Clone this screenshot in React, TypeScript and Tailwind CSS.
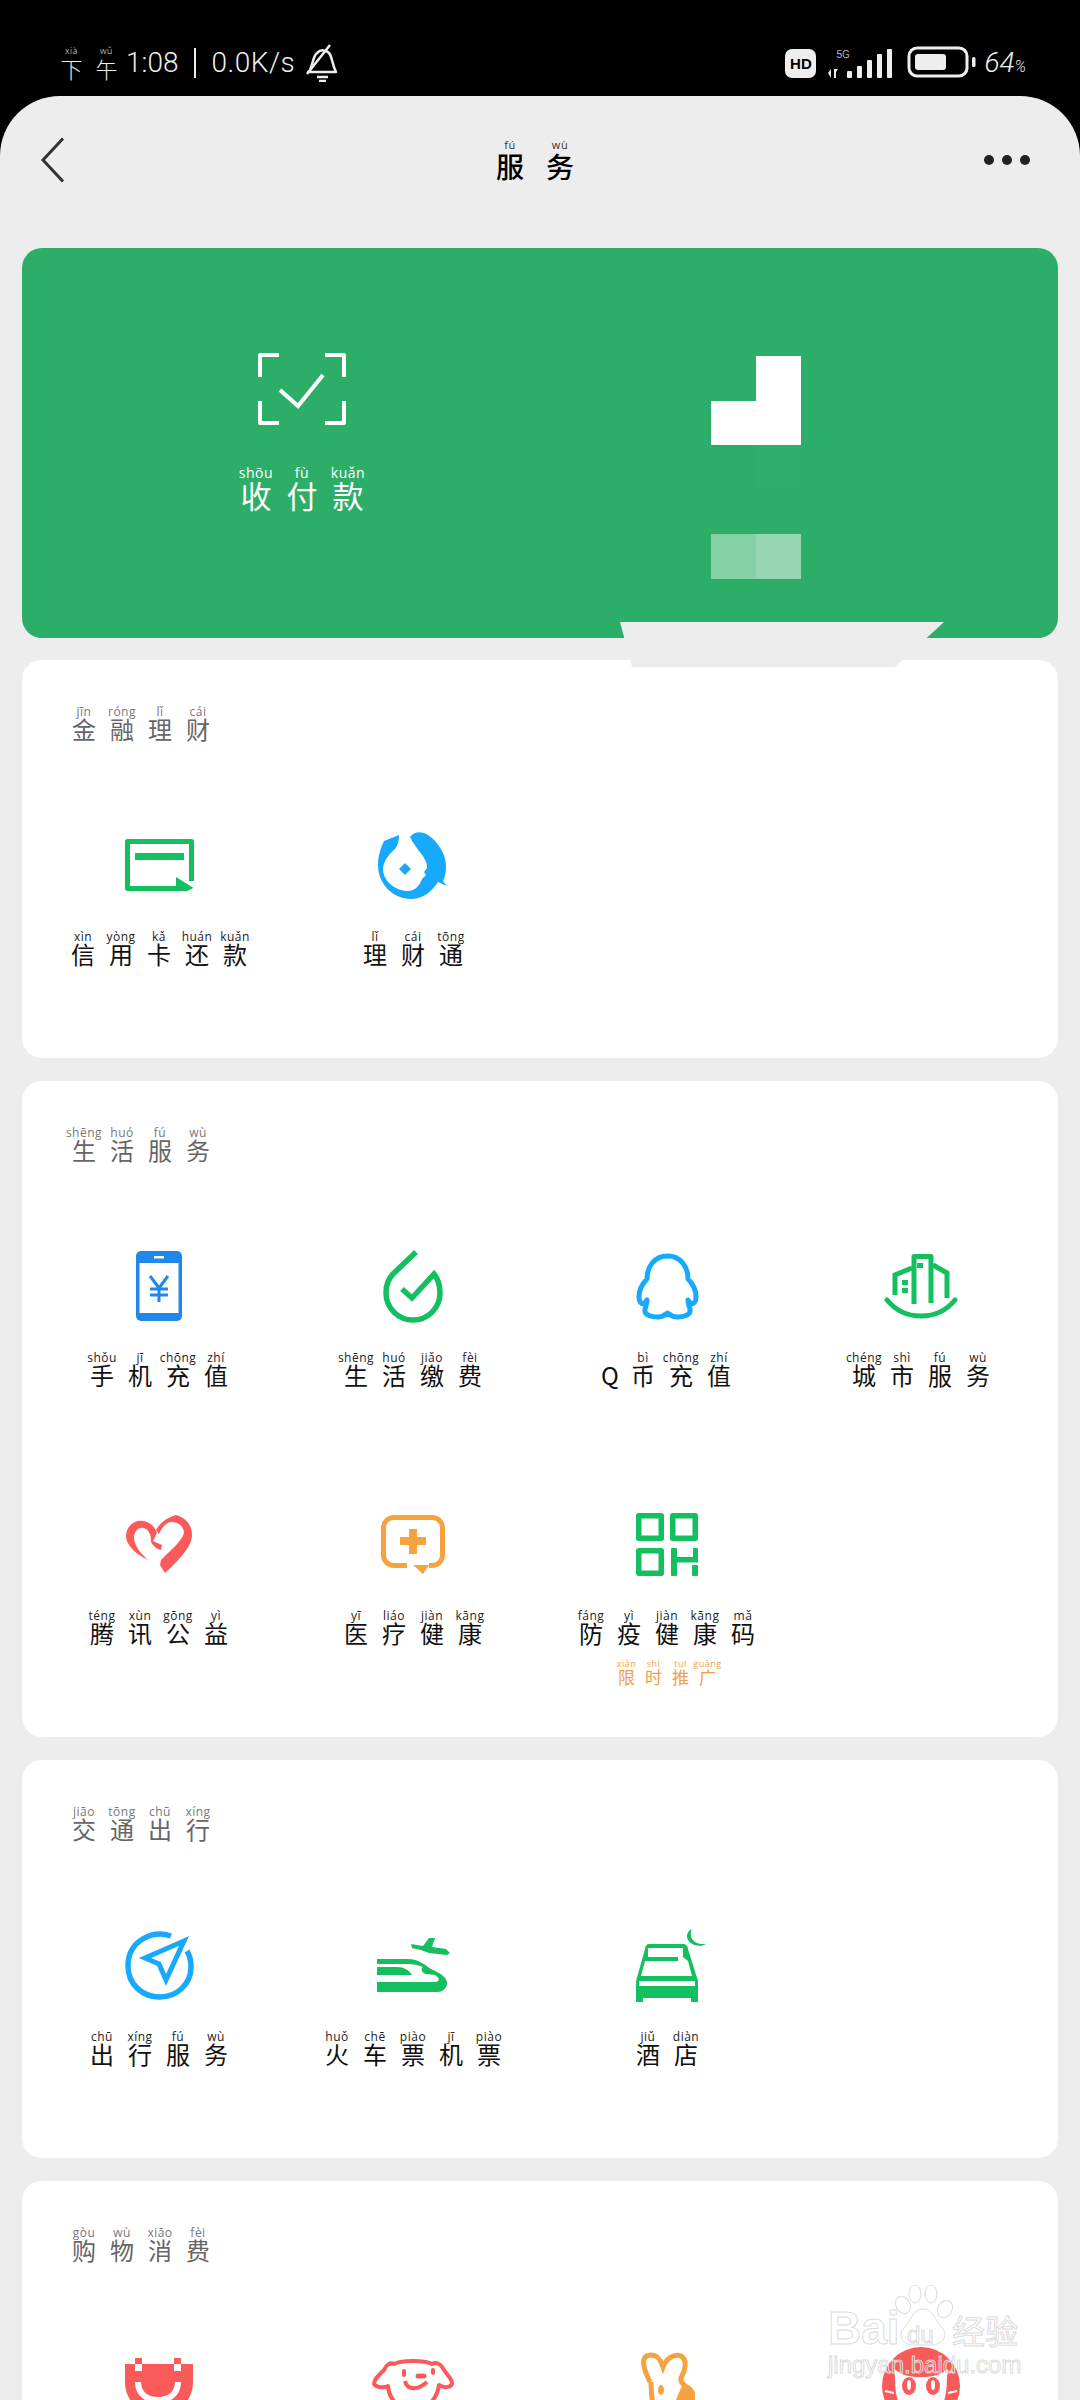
import type { ReactNode } from "react";

const sizes = {
  nav: { cell: "w-[50px]", py: "h-[12px] text-[11px] leading-[12px] text-[#333]", ch: "h-[30px] text-[28px] leading-[30px] text-black font-medium" },
  pay: { cell: "w-[46px]", py: "h-[16px] text-[14px] leading-[16px] text-white", ch: "h-[28px] text-[31px] leading-[28px] text-white" },
  title: { cell: "w-[38px]", py: "h-[14px] text-[12px] leading-[14px] text-[#777]", ch: "h-[20px] text-[24px] leading-[20px] text-[#666]" },
  item: { cell: "w-[38px]", py: "h-[14px] text-[12px] leading-[14px] text-[#222]", ch: "h-[20px] text-[24px] leading-[20px] text-[#111]" },
  promo: { cell: "w-[27px]", py: "h-[10px] text-[9px] leading-[10px] text-[#f0a04b]", ch: "h-[16px] text-[17px] leading-[16px] text-[#f0a04b]" },
  status: { cell: "w-[35px]", py: "h-[10px] text-[9px] leading-[10px] text-[#eee]", ch: "h-[24px] text-[22px] leading-[24px] text-[#eee]" },
};

function Py({ text, py, size }: { text: string; py: string; size: keyof typeof sizes }) {
  const s = sizes[size];
  const syllables = py.split(" ");
  return (
    <div className="flex justify-center">
      {Array.from(text).map((c, i) => (
        <div key={i} className={`flex flex-col items-center ${c === "Q" ? "w-[28px]" : s.cell}`}>
          <span className={`whitespace-nowrap tracking-[0.5px] font-['Open_Sans',sans-serif] ${s.py}`}>{syllables[i] === "_" ? "" : syllables[i]}</span>
          <span className={`font-['Noto_Sans_CJK_SC',sans-serif] ${s.ch}`}>{c}</span>
        </div>
      ))}
    </div>
  );
}

const CardIcon = () => (
  <svg width="69" height="52" viewBox="0 0 69 52" fill="none">
    <path d="M66.5 42V2.5H2.5V49.5H52" stroke="#13bf5f" strokeWidth="5" strokeLinejoin="round" />
    <rect x="10" y="14" width="49" height="7" fill="#13bf5f" />
    <path d="M51 38L68.5 49L62 52H51Z" fill="#13bf5f" />
  </svg>
);

const FishIcon = () => (
  <svg width="70" height="67" viewBox="0 0 70 67">
    <path d="M32 5C36 -1 44 -1 50 3C60 10 68 22 68 34C68 42 66 47 65 49L69 54L60 50C52 62 43 67 33 67C15 67 0 52 0 33C0 24 3 15 6 9L21 3C21 9 20 13 17 17C10 23 5 30 5 38C6 50 18 59 30 59C36 59 41 55 44 47L48 43L46 40L49 36C50 26 38 18 32 5Z" fill="#17a9fb" />
    <path d="M27 31L33 37L27 43L21 37Z" fill="#17a9fb" />
  </svg>
);

const PhoneIcon = () => (
  <svg width="46" height="70" viewBox="0 0 46 70">
    <rect width="46" height="70" rx="5" fill="#1f88e8" />
    <rect x="3.5" y="12" width="39" height="50" fill="#fff" />
    <rect x="18" y="5" width="10" height="2.5" fill="#fff" />
    <path d="M14 25L23 37L32 25M23 37V51M14 38H32M14 44H32" stroke="#1f88e8" strokeWidth="3" fill="none" />
  </svg>
);

const DropIcon = () => (
  <svg width="60" height="73" viewBox="0 0 60 73" fill="none">
    <path d="M33 2L10 24C5 29 3 36 3 43C3 58 15 70 30 70C45 70 57 58 57 43C57 36 55 29 51 24L29 48L19 39" stroke="#13bf5f" strokeWidth="5.5" />
  </svg>
);

const QQIcon = () => (
  <svg width="63" height="67" viewBox="0 0 63 67" fill="none">
    <path d="M31.5 3C19 3 11 13 11 26C6 31 3 37 3 44C3 48 5 51 8 51L11 47C11 50 10 53 9 56C8 61 13 64 22 64C27 64 29 62 31.5 60C34 62 36 64 41 64C50 64 55 61 54 56C53 53 52 50 52 47L55 51C58 51 60 48 60 44C60 37 57 31 52 26C52 13 44 3 31.5 3Z" stroke="#17a9fb" strokeWidth="5" strokeLinejoin="round" />
  </svg>
);

const CityIcon = () => (
  <svg width="74" height="66" viewBox="0 0 74 66" fill="none" stroke="#13bf5f" strokeWidth="5">
    <path d="M30 51V3.5H47V50" strokeLinejoin="round" />
    <path d="M11 42V22L28 15M49 12L63 20V45" />
    <path d="M3 47C12 58 24 63 37 63C50 63 62 58 71 47" strokeLinecap="round" />
    <g fill="#13bf5f" stroke="none">
      <rect x="33" y="10" width="6" height="5" />
      <rect x="18" y="27" width="6" height="5" />
      <rect x="18" y="35" width="6" height="5" />
    </g>
  </svg>
);

const HeartIcon = () => (
  <svg width="66" height="58" viewBox="0 0 66 58" fill="#fb5a5a">
    <path d="M30 15C34 8 40 3 50 0C60 3 66 10 66 20C66 32 52 46 39 58L34 50L35 45C44 36 56 26 58 18C58 11 52 7 45 7C39 8 36 13 33 19Z" />
    <path d="M31 18C28 9 20 5 12 6C4 8 0 14 0 22C1 32 12 40 22 45C14 38 8 30 8 22C9 14 15 11 20 14C25 17 25 24 25 27C27 31 32 35 35 35L36 30L27 26Z" />
  </svg>
);

const MedicalIcon = () => (
  <svg width="64" height="59" viewBox="0 0 64 59" fill="none">
    <path d="M26 50.5H13C7 50.5 2.5 46 2.5 40V13C2.5 7 7 2.5 13 2.5H51C57 2.5 61.5 7 61.5 13V40C61.5 46 57 50.5 51 50.5H48" stroke="#f6a23f" strokeWidth="5" />
    <path d="M32 50H48L42 59Z" fill="#f6a23f" />
    <path d="M28 14H36V22H45V30H36V39H28V30H19V22H28Z" fill="#f6a23f" />
  </svg>
);

const QrIcon = () => (
  <svg width="62" height="63" viewBox="0 0 62 63" fill="none">
    <g stroke="#13bf5f" strokeWidth="5.5" strokeLinejoin="round">
      <rect x="2.75" y="2.75" width="22.5" height="22.5" />
      <rect x="36.75" y="2.75" width="22.5" height="22.5" />
      <rect x="2.75" y="37.75" width="22.5" height="22.5" />
    </g>
    <g fill="#13bf5f">
      <rect x="35" y="35" width="6" height="28" rx="1" />
      <rect x="35" y="44" width="27" height="5.5" />
      <rect x="57" y="35" width="5" height="12" rx="1" />
      <rect x="56" y="52" width="6" height="11" rx="1" />
    </g>
  </svg>
);

const CompassIcon = () => (
  <svg width="69" height="69" viewBox="0 0 69 69" fill="none">
    <path d="M46 5C28 -1 3 9 3 35C3 54 18 66 35 66C52 66 66 53 66 36C66 30 65 25 62 20" stroke="#17a9fb" strokeWidth="5.5" />
    <path d="M59 10L20 27L34 33L41 49Z" stroke="#17a9fb" strokeWidth="5" strokeLinejoin="miter" />
  </svg>
);

const TrainIcon = () => (
  <svg width="73" height="54" viewBox="0 0 73 54" fill="#13bf5f">
    <path d="M34 6L46 8L52 0H58L55 9L69 11L73 15L70 17L52 15L44 12L35 10Z" />
    <path d="M0 21H30C41 21 47 26 54 31C66 36 73 42 69 49C66 54 62 54 58 54H0V44H58C63 44 63 40 58 37L50 36C45 36 43 30 46 29C41 27 36 26 30 26H0Z" />
    <path d="M0 29H20C27 29 32 32 35 37H0Z" />
  </svg>
);

const HotelIcon = () => (
  <svg className="ml-[8px]" width="70" height="73" viewBox="0 0 70 73">
    <path d="M13 15H47C50 15 52 17 52 20L62 52V73H0V52L9 20C9 17 11 15 13 15Z" fill="#13bf5f" />
    <rect x="12" y="19" width="35" height="9" rx="1" fill="#fff" />
    <path d="M9 32H42V28H47L52 32L56 47H5Z" fill="#fff" />
    <rect x="3" y="52" width="56" height="5" fill="#fff" />
    <rect x="7" y="69" width="48" height="4" fill="#fff" />
    <path d="M56 0C53 6 55 16 70 15C62 20 50 14 51 6C52 3 53 1 56 0Z" fill="#13bf5f" />
  </svg>
);

const BagIcon = () => (
  <svg width="68" height="56" viewBox="0 0 68 56" fill="none">
    <path d="M0 6H68V24C68 42 55 56 34 56C13 56 0 42 0 24Z" fill="#fb5a5a" />
    <rect x="10" width="7" height="6" fill="#fb5a5a" />
    <rect x="49" width="7" height="6" fill="#fb5a5a" />
    <rect x="10" y="6" width="7" height="7" fill="#fff" />
    <rect x="49" y="6" width="7" height="7" fill="#fff" />
    <path d="M13 24C13 36 22 42 33 42C44 42 53 36 53 24" stroke="#fff" strokeWidth="6" />
  </svg>
);

const DogIcon = () => (
  <svg width="82" height="56" viewBox="0 0 82 56" fill="none" stroke="#fb5a5a" strokeWidth="4">
    <path d="M22 6C30 2 52 2 60 6C66 3 70 8 72 12C76 18 81 22 80 26C78 30 72 30 67 27C65 42 54 52 41 52C28 52 17 42 16 28C12 30 5 30 2 26C2 21 7 17 12 12C14 7 18 4 22 6Z" strokeLinejoin="round" />
    <path d="M33 23C35 32 45 33 55 24" />
    <path d="M32 13V17" strokeLinecap="round" />
    <path d="M46 18H52" strokeWidth="5" strokeLinecap="round" />
    <path d="M61 12V15" strokeLinecap="round" />
  </svg>
);

const RabbitIcon = () => (
  <svg width="56" height="68" viewBox="0 0 56 68" fill="none">
    <path d="M11 30C4 16 1 4 11 3C19 2 22 9 24 15C27 7 35 1 42 4C49 8 46 19 42 26C41 30 44 32 46 34" stroke="#f6a23f" strokeWidth="5" />
    <path d="M12 30C12 40 14 54 15 68M46 34C50 36 55 40 55 48C55 56 50 62 44 68H34C36 60 38 48 46 34Z" stroke="#f6a23f" strokeWidth="5" fill="#f6a23f" />
    <ellipse cx="22" cy="38" rx="3" ry="5" fill="#f6a23f" />
  </svg>
);

const CatIcon = () => (
  <svg width="78" height="78" viewBox="0 0 78 78">
    <circle cx="39" cy="39" r="39" fill="#fb5a5a" />
    <path d="M12 22C20 28 26 30 39 30C52 30 58 28 66 22C64 32 66 42 62 54H16C12 42 14 32 12 22Z" fill="#fff" />
    <ellipse cx="27" cy="39" rx="7" ry="9" fill="#fb5a5a" />
    <ellipse cx="51" cy="39" rx="7" ry="9" fill="#fb5a5a" />
    <ellipse cx="27" cy="38" rx="2" ry="5" fill="#fff" />
    <ellipse cx="51" cy="38" rx="2" ry="5" fill="#fff" />
    <path d="M3 44L12 46M75 44L66 46" stroke="#fff" strokeWidth="2" />
  </svg>
);

type Item = { text: string; py: string; icon: ReactNode; promo?: boolean };

const sections: { text: string; py: string; items: Item[] }[] = [
  {
    text: "金融理财",
    py: "jīn róng lǐ cái",
    items: [
      { text: "信用卡还款", py: "xìn yòng kǎ huán kuǎn", icon: <CardIcon /> },
      { text: "理财通", py: "lǐ cái tōng", icon: <FishIcon /> },
    ],
  },
  {
    text: "生活服务",
    py: "shēng huó fú wù",
    items: [
      { text: "手机充值", py: "shǒu jī chōng zhí", icon: <PhoneIcon /> },
      { text: "生活缴费", py: "shēng huó jiǎo fèi", icon: <DropIcon /> },
      { text: "Q币充值", py: "_ bì chōng zhí", icon: <QQIcon /> },
      { text: "城市服务", py: "chéng shì fú wù", icon: <CityIcon /> },
      { text: "腾讯公益", py: "téng xùn gōng yì", icon: <HeartIcon /> },
      { text: "医疗健康", py: "yī liáo jiàn kāng", icon: <MedicalIcon /> },
      { text: "防疫健康码", py: "fáng yì jiàn kāng mǎ", icon: <QrIcon />, promo: true },
    ],
  },
  {
    text: "交通出行",
    py: "jiāo tōng chū xíng",
    items: [
      { text: "出行服务", py: "chū xíng fú wù", icon: <CompassIcon /> },
      { text: "火车票机票", py: "huǒ chē piào jī piào", icon: <TrainIcon /> },
      { text: "酒店", py: "jiǔ diàn", icon: <HotelIcon /> },
    ],
  },
  {
    // labels of this row fall below the bottom of the screen
    text: "购物消费",
    py: "gòu wù xiāo fèi",
    items: [
      { text: "", py: "", icon: <BagIcon /> },
      { text: "", py: "", icon: <DogIcon /> },
      { text: "", py: "", icon: <RabbitIcon /> },
      { text: "", py: "", icon: <CatIcon /> },
    ],
  },
];

function StatusBar() {
  return (
    <div className="h-[96px] flex items-start pt-[46px] pl-[54px] pr-[54px] text-[#eee] font-['Roboto',sans-serif] font-light">
      <Py text="下午" py="xià wǔ" size="status" />
      <span className="ml-[2px] text-[28px] leading-[34px]">1:08</span>
      <span className="ml-[16px] mt-[2px] w-[2px] h-[30px] bg-[#eee]" />
      <span className="ml-[15px] text-[28px] leading-[34px] tracking-[0.5px]">0.0K/s</span>
      <svg className="ml-[9px] -mt-[2px]" width="36" height="38" viewBox="0 0 36 38" fill="none" stroke="#eee" strokeWidth="2.5">
        <path d="M6 26C9 20 9 12 13 9C17 5 22 6 25 9C28 12 28 20 32 28H3" strokeLinejoin="round" />
        <path d="M3 30L26 1" />
        <path d="M13 33H24M15 37H22" />
      </svg>
      <div className="ml-auto flex items-start">
        <div className="mt-[3px] w-[31px] h-[29px] rounded-[7px] bg-[#eee] text-black text-[15px] leading-[29px] font-black text-center font-['Liberation_Sans',sans-serif]">HD</div>
        <svg className="ml-[11px]" width="68" height="34" viewBox="0 0 68 34" fill="#eee">
          <text x="9" y="12" fontSize="11" fontFamily="Roboto, sans-serif">5G</text>
          <path d="M1 27L4 23V32ZM7 23H11L9 26V32H7Z" />
          <rect x="20" y="25" width="5" height="7" rx="1" />
          <rect x="30" y="20" width="5" height="12" rx="1" />
          <rect x="40" y="14" width="5" height="18" rx="1" />
          <rect x="50" y="8" width="5" height="24" rx="1" />
          <rect x="60" y="3" width="5" height="29" rx="1" />
        </svg>
        <svg className="ml-[12px]" width="70" height="32" viewBox="0 0 70 32" fill="none">
          <rect x="2" y="2" width="58" height="28" rx="8" stroke="#eee" strokeWidth="3" />
          <rect x="8" y="8" width="31" height="16" rx="3" fill="#eee" />
          <rect x="65" y="11" width="3.5" height="10" rx="1.5" fill="#eee" />
        </svg>
        <span className="ml-[7px] text-[28px] leading-[34px] italic">64<span className="text-[16px]">%</span></span>
      </div>
    </div>
  );
}

function Nav() {
  return (
    <div className="h-[152px] pb-[24px] flex items-center">
      <div className="w-[485px] pl-[41px]">
        <svg width="24" height="46" viewBox="0 0 24 46" fill="none">
          <path d="M22 1.5L2 23L22 44.5" stroke="#333" strokeWidth="3" />
        </svg>
      </div>
      <Py text="服务" py="fú wù" size="nav" />
      <div className="ml-auto pr-[50px] flex gap-[8px]">
        <span className="w-[10px] h-[10px] rounded-full bg-[#222]" />
        <span className="w-[10px] h-[10px] rounded-full bg-[#222]" />
        <span className="w-[10px] h-[10px] rounded-full bg-[#222]" />
      </div>
    </div>
  );
}

const codeCells = [
  "",
  "bg-white",
  "bg-white",
  "bg-white",
  "",
  "bg-[#2daf6a]",
  "",
  "",
  "bg-[#84d1a5]",
  "bg-[#96d6b1]",
];

function PayCard() {
  return (
    <div className="h-[390px] rounded-[20px] bg-[#2cae69] flex">
      <div className="w-[560px] pt-[105px] flex flex-col items-center">
        <svg width="90" height="72" viewBox="0 0 90 72" fill="none" stroke="#fff" strokeWidth="4">
          <path d="M22 2H3V24M68 2H87V24M3 48V70H22M68 70H87V48" strokeLinejoin="round" />
          <path d="M23 37L41 53L66 22" strokeWidth="4" />
        </svg>
        <div className="mt-[40px]">
          <Py text="收付款" py="shōu fù kuǎn" size="pay" />
        </div>
      </div>
      <div className="ml-[129px] mt-[108px] w-[90px] grid grid-cols-2 auto-rows-[44.5px] h-fit">
        {codeCells.map((c, i) => (
          <div key={i} className={c} />
        ))}
      </div>
    </div>
  );
}

function Watermark() {
  return (
    <div className="absolute left-[828px] top-[2285px] w-[200px] h-[92px] text-transparent [-webkit-text-stroke:1px_#dcdcdc] font-['Liberation_Sans',sans-serif]">
      <span className="absolute left-0 top-[20px] text-[46px] leading-[46px] font-bold">Bai</span>
      <svg className="absolute left-[65px] top-0" width="60" height="62" viewBox="0 0 60 62" fill="#fff" fillOpacity="0.35" stroke="#dcdcdc" strokeWidth="1">
        <ellipse cx="10" cy="20" rx="7" ry="9" transform="rotate(-30 10 20)" />
        <ellipse cx="22" cy="9" rx="6" ry="9" />
        <ellipse cx="38" cy="9" rx="6" ry="9" />
        <ellipse cx="52" cy="24" rx="7" ry="9" transform="rotate(30 52 24)" />
        <path d="M30 24C40 24 42 36 50 44C56 54 46 61 36 60H24C12 61 4 54 10 44C18 36 20 24 30 24Z" />
      </svg>
      <span className="absolute left-[79px] top-[38px] text-[24px] leading-[24px]">du</span>
      <span className="absolute left-[124px] top-[27px] text-[33px] leading-[36px] font-['Noto_Sans_CJK_SC',sans-serif]">经验</span>
      <span className="absolute left-0 top-[66px] text-[24px] leading-[28px] whitespace-nowrap">jingyan.baidu.com</span>
    </div>
  );
}

export default function App() {
  return (
    <div className="relative w-[1080px] h-[2400px] overflow-hidden bg-black">
      <StatusBar />
      <div className="rounded-t-[60px] bg-[#ededed] h-[2304px]">
        <Nav />
        <div className="px-[22px]">
          <PayCard />
          <div className="mt-[22px] flex flex-col gap-[23px]">
            {sections.map((s) => (
              <div key={s.text} className="rounded-[20px] bg-white">
                <div className="pt-[45px] pl-[43px] flex">
                  <Py text={s.text} py={s.py} size="title" />
                </div>
                <div className="mt-[61px] px-[10px] grid grid-cols-4 auto-rows-[258px]">
                  {s.items.map((it, i) => (
                    <div key={i} className="flex flex-col items-center">
                      <div className="h-[130px] flex items-center justify-center">{it.icon}</div>
                      <Py text={it.text} py={it.py} size="item" />
                      {it.promo && (
                        <div className="mt-[16px]">
                          <Py text="限时推广" py="xiàn shí tuī guǎng" size="promo" />
                        </div>
                      )}
                    </div>
                  ))}
                </div>
              </div>
            ))}
          </div>
        </div>
      </div>
      <div className="absolute left-[620px] top-[622px] w-[324px] h-[45px] bg-[#ededed] [clip-path:polygon(0_0,100%_0,275px_100%,12px_100%)]" />
      <Watermark />
    </div>
  );
}
